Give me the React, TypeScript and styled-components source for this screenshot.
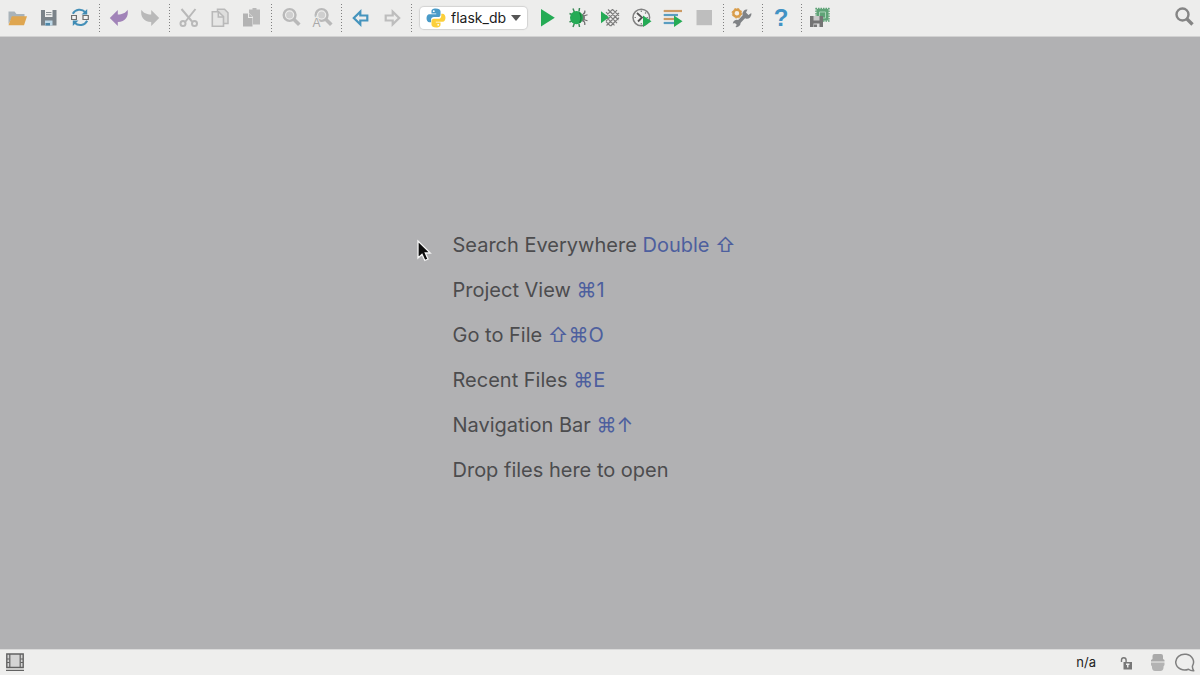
import React from "react";
import styled, { createGlobalStyle } from "styled-components";

const GlobalStyle = createGlobalStyle`
  * { box-sizing: border-box; }
  body {
    margin: 0;
    background: #b1b1b3;
    font-family: Inter, "Liberation Sans", "DejaVu Sans", sans-serif;
  }
`;

const Window = styled.div`
  display: flex;
  flex-direction: column;
  min-height: 100vh;
`;

const Toolbar = styled.header`
  display: flex;
  align-items: center;
  height: 37px;
  padding-left: 2px;
  background: #ededec;
  border-bottom: 1px solid #d2d2d2;
`;

const ToolGroup = styled.div<{ $trail?: number }>`
  display: flex;
  align-items: center;
  padding-right: ${(p) => p.$trail ?? 0}px;
`;

const Separator = styled.span`
  width: 8px;
  height: 28px;
  display: flex;
  justify-content: center;

  &::before {
    content: "";
    width: 1px;
    background: repeating-linear-gradient(#808080 0 1px, transparent 1px 3px);
  }
`;

const Spacer = styled.div`
  flex: 1;
`;

const ToolButton = styled.button`
  display: flex;
  justify-content: center;
  width: 31px;
  padding: 0;
  border: 0;
  background: none;

  svg {
    display: block;
    width: 21px;
    height: 21px;
    overflow: visible;
  }
`;

const ConfigBox = styled.label`
  display: flex;
  align-items: center;
  gap: 5px;
  height: 22px;
  margin: 0 5px 0 5px;
  padding: 0 6px 0 6px;
  border-radius: 4px;
  background: #fff;
  box-shadow: 0 0 1px 1px #d2d2d2;

  svg {
    display: block;
    flex: none;
  }
`;

const ConfigSelect = styled.select`
  appearance: none;
  width: 55px;
  padding: 0;
  border: 0;
  background: none;
  color: #1c1c1c;
  font: 14px/20px Inter, "Liberation Sans", sans-serif;
`;

const EmptyEditor = styled.main`
  position: relative;
  flex: 1;
  display: flex;
  align-items: center;
  justify-content: center;
  padding-top: 30px;
`;

const Hints = styled.ul`
  position: relative;
  width: 295px;
  margin: 0;
  padding: 0;
  list-style: none;
`;

const Hint = styled.li`
  color: #4c4c4e;
  font-size: 20px;
  line-height: 45px;
  white-space: nowrap;
`;

const Shortcut = styled.span`
  color: #4d5f9e;
`;

const Pointer = styled.svg`
  position: absolute;
  left: -37px;
  top: 16px;
  width: 16px;
  height: 24px;
`;

const StatusBar = styled.footer`
  display: flex;
  align-items: center;
  gap: 10px;
  height: 26px;
  padding: 0 5px 2px;
  background: #eeeeed;
  border-top: 1px solid #dadada;
`;

const StatusButton = styled.button`
  padding: 0;
  border: 0;
  background: none;

  svg {
    display: block;
    width: 20px;
    height: 20px;
  }
`;

const StatusText = styled.span`
  padding-right: 9px;
  color: #222;
  font-size: 13px;
  line-height: 20px;
`;

const GREY = "#b9b9b9";
const GREEN = "#25ab55";

type ToolProps = { label: string; box?: string; children: React.ReactNode };

const Tool = ({ label, box = "0 0 21 21", children }: ToolProps) => (
  <ToolButton type="button" aria-label={label}>
    <svg viewBox={box} fill="none">{children}</svg>
  </ToolButton>
);

const StatusTool = ({ label, children }: ToolProps) => (
  <StatusButton type="button" aria-label={label}>
    <svg viewBox="0 0 20 20" fill="none">{children}</svg>
  </StatusButton>
);

const MiniPlay = () => <path d="M13 7.5 21.5 13.2 13 19Z" fill={GREEN} />;

const Bolt = () => (
  <path d="M1.800 10 9.800 2V6.500C14 6.500 18 5 19.600 1.800 20.800 8.500 17.500 13.800 9.800 14V18Z" />
);

const Lens = ({ color }: { color: string }) => (
  <>
    <circle cx="9.600" cy="7" r="5.900" stroke={color} strokeWidth="2.400" />
    <path d="m14 11.500 5.300 5.300" stroke={color} strokeWidth="3.600" />
  </>
);

const PythonLogo = () => (
  <svg width="20" height="20" viewBox="0.500 0.500 19 19" aria-hidden="true">
    <path
      d="M9.800 1C6.500 1 5.700 2.300 5.700 3.800V5.700H10.200V6.400H3.700C1.900 6.400 1 8.300 1 10.200 1 12.300 2 14 3.700 14H5.300V11.700C5.300 10 6.600 9.100 8 9.100H12C13.400 9.100 14.300 8.200 14.300 6.800V3.800C14.300 2 12.500 1 9.800 1Z"
      fill="#4a9bc8"
    />
    <path
      d="M10.200 19C13.500 19 14.300 17.700 14.300 16.200V14.300H9.800V13.600H16.300C18.100 13.600 19 11.700 19 9.800 19 7.700 18 6 16.300 6H15V8C15 9.900 13.600 10.700 12.200 10.700H8C6.600 10.700 5.700 11.700 5.700 13.100V16.200C5.700 18 7.500 19 10.200 19Z"
      fill="#fbcf3b"
    />
    <circle cx="7.900" cy="3.500" r=".9" fill="#fff" />
    <circle cx="12.100" cy="16.500" r=".9" fill="#fff" />
  </svg>
);

const hints: { text: string; keys?: string }[] = [
  { text: "Search Everywhere", keys: "Double ⇧" },
  { text: "Project View", keys: "⌘1" },
  { text: "Go to File", keys: "⇧⌘O" },
  { text: "Recent Files", keys: "⌘E" },
  { text: "Navigation Bar", keys: "⌘↑" },
  { text: "Drop files here to open" },
];

export default function App() {
  return (
    <Window>
      <GlobalStyle />
      <Toolbar>
        <ToolGroup>
          <Tool label="Open">
            <path d="M1.500 16V3.500H7.500L9.500 6H17.500V10H5Z" fill="#a9b3b9" />
            <path d="M4.800 8.300H20L17 17.200H1.500Z" fill="#dfa650" />
          </Tool>
          <Tool label="Save all">
            <path d="M3 2H18.500V17.500H3Z" fill="#7b8389" />
            <path d="M7 2H14.500V9H7Z" fill="#f1f1f0" />
            <path d="M8 4.500H13.500M8 6.700H13.500" stroke="#8b9296" strokeWidth="1" />
            <path d="M7 12.500H14.500V17.500H7Z" fill="#bfd9e8" />
            <path d="M7.500 15H12V17.500H7.500Z" fill="#4d87a8" />
          </Tool>
          <Tool label="Synchronize">
            <path d="M3.800 5.800A7.800 7.800 0 0 1 16.300 4.200M18.200 12.800A7.800 7.800 0 0 1 5.700 14.800" stroke="#4590b8" strokeWidth="2" />
            <path d="M18.200 1V6.500H12.500ZM3.800 18V12.500H9.500Z" fill="#3f8bb4" />
            <path d="M2.600 7.500H7.400V11.500H2.600ZM14 7.500H19.300V11.500H14Z" fill="#f5f5f4" stroke="#6f6f6f" strokeWidth="1.200" />
          </Tool>
        </ToolGroup>
        <Separator />
        <ToolGroup>
          <Tool label="Undo"><g fill="#a183b8"><Bolt /></g></Tool>
          <Tool label="Redo"><g fill={GREY} transform="translate(22 0) scale(-1 1)"><Bolt /></g></Tool>
        </ToolGroup>
        <Separator />
        <ToolGroup $trail={1}>
          <Tool label="Cut">
            <path d="M3.500 1 14 13.500M17.500 1 7.500 13.500" stroke={GREY} strokeWidth="2" />
            <circle cx="5" cy="15.500" r="2.500" stroke={GREY} strokeWidth="2" />
            <circle cx="16.500" cy="15.500" r="2.500" stroke={GREY} strokeWidth="2" />
          </Tool>
          <Tool label="Copy">
            <path d="M8.500 1.200H15.500L19 4.700V15.500H8.500Z" fill="#dededd" stroke={GREY} strokeWidth="1.500" />
            <path d="M3.300 3.700H9.500L14.500 8.500V18.200H3.300Z" fill="#e6e6e5" stroke={GREY} strokeWidth="1.600" />
            <path d="M9.300 3.700V9H14.500" stroke={GREY} strokeWidth="1.500" />
          </Tool>
          <Tool label="Paste">
            <path d="M9 1.500H12.500V0H16.500V1.500H20V16.500H9Z" fill={GREY} />
            <path d="M2.500 4.500H8.500L13 9V19H2.500Z" fill="#ededec" />
            <path d="M3 5.500H8V10H12.500V18.500H3Z" fill="#b3b3b3" />
            <path d="m9 5.500 3.500 3.500H9Z" fill={GREY} />
          </Tool>
        </ToolGroup>
        <Separator />
        <ToolGroup>
          <Tool label="Find">
            <circle cx="9.600" cy="7" r="3.500" fill="#cfcfcf" />
            <Lens color={GREY} />
          </Tool>
          <Tool label="Replace">
            <g transform="translate(1 0)"><circle cx="9.600" cy="7" r="3.500" fill="#cfcfcf" /><Lens color={GREY} /></g>
            <text x="1.500" y="19" fontSize="12" fontWeight="500" fill="#a9a9a9" stroke="#ededec" strokeWidth="2" paintOrder="stroke">A</text>
          </Tool>
        </ToolGroup>
        <Separator />
        <ToolGroup>
          <Tool label="Back">
            <path d="M3.800 10 10.300 3.700V7.500H17.300V12.500H10.300V16.300Z" stroke="#4594bd" strokeWidth="2.200" />
          </Tool>
          <Tool label="Forward">
            <path d="M18.200 10 11.700 3.700V7.500H4.700V12.500H11.700V16.300Z" stroke="#bdbdbd" strokeWidth="2.200" />
          </Tool>
        </ToolGroup>
        <Separator />
        <ConfigBox>
          <PythonLogo />
          <ConfigSelect aria-label="Run configuration" defaultValue="flask_db">
            <option value="flask_db">flask_db</option>
          </ConfigSelect>
          <svg width="10" height="6" viewBox="0 0 10 6" aria-hidden="true">
            <path d="M0 0H10L5 6Z" fill="#555" />
          </svg>
        </ConfigBox>
        <ToolGroup $trail={1}>
          <Tool label="Run"><path d="M4 1 17.800 9.800 4 18.600Z" fill={GREEN} /></Tool>
          <Tool label="Debug">
            <path d="M5 .5 6.500 4.500M11.500 0 11 3.500M1.500 5.500 5 7M1.500 14 5 12.500M5 19 6.500 15M11.500 19 11 16" stroke="#3b8a57" strokeWidth="1.500" />
            <path d="M15 6C17 5.500 17 3.500 16.800 2.500M15.500 8 19.500 6.800M15.500 11.500 19.500 12.700M15 13C17 13.500 17 15.500 16.800 17" stroke="#6d6d6d" strokeWidth="1.200" />
            <path d="M13.500 5.500Q17 6.500 17 9.800T13.500 14Z" fill="#777" />
            <ellipse cx="8.500" cy="9.700" rx="6.500" ry="6.600" fill={GREEN} />
            <path d="M11.500 4.500Q14.500 9.700 11.500 15" stroke="#187c3c" strokeWidth="1.200" />
          </Tool>
          <Tool label="Run with coverage">
            <path d="M9 1.500 19.500 12M7 4.200 18 15.200M7 8.900 15.500 17.400M7 13.600 11.500 18.100M13.500 1.300 20 7.800M13.500 1.300 7 7.800M18 2.200 7 13.200M20 5 7.500 17.500M20 9.700 11.700 18" stroke="#7c7c7c" strokeWidth="1.200" />
            <path d="M2 3.300 10 9.300 2 15.300Z" fill={GREEN} />
          </Tool>
          <Tool label="Profile">
            <circle cx="11.300" cy="9.500" r="8.300" fill="#f1f1f0" stroke="#818181" strokeWidth="1.500" />
            <path d="M7 5 12 9.500 8 13.500" stroke="#555" strokeWidth="1.800" />
            <path d="M11.300 2.500V4M11.300 15V16.500M4.500 9.500H6M16.500 9.500H18M16 4.500 15 5.500" stroke="#818181" strokeWidth="1.200" />
            <MiniPlay />
          </Tool>
          <Tool label="Concurrency diagram">
            <path d="M2.700 3H21" stroke="#cc9a64" strokeWidth="2.200" />
            <path d="M2.700 7H17" stroke="#5a9dc0" strokeWidth="2.200" />
            <path d="M2.700 11H13" stroke="#cc9a64" strokeWidth="2.200" />
            <path d="M2.700 15H13" stroke="#5a9dc0" strokeWidth="2.200" />
            <MiniPlay />
          </Tool>
          <Tool label="Stop"><path d="M4.500 2H20V17.200H4.500Z" fill="#bebebe" /></Tool>
        </ToolGroup>
        <Separator />
        <ToolGroup>
          <Tool label="Settings">
            <path d="M4.500 16.500 14 6.500" stroke="#808386" strokeWidth="3.800" />
            <path d="M15.500 1.500A4.500 4.500 0 0 0 10.500 7L13.500 10.500A4.500 4.500 0 0 0 19.300 5L16.500 7 14 4.500Z" fill="#808386" />
            <path d="M3.500 19A4 4 0 0 0 8.500 14.500L6 12A4 4 0 0 0 .8 15.500L3.500 15 5 16.500Z" fill="#808386" />
            <circle cx="4.900" cy="5.200" r="3.500" stroke="#d99c48" strokeWidth="2.400" fill="#f4eee5" />
            <circle cx="4.900" cy="5.200" r="4.800" stroke="#d99c48" strokeWidth="1" strokeDasharray="2 1.770" />
          </Tool>
        </ToolGroup>
        <Separator />
        <ToolGroup>
          <Tool label="Help">
            <text x="10" y="18" textAnchor="middle" fontSize="24" fontWeight="700" fill="#4292c4">?</text>
          </Tool>
        </ToolGroup>
        <Separator />
        <ToolGroup>
          <Tool label="Save environment">
            <path d="M6.500 .8H18.500V12.500H6.500Z" fill="#5fa377" />
            <path d="M5.500 .5H19.300M5.500 13H19.300M6 0V13.500M19 0V13.500" stroke="#5fa377" strokeWidth="1.400" strokeDasharray="1.500 1" />
            <path d="M9.500 4H15.500V10H9.500Z" stroke="#a9d2b6" strokeWidth="1" />
            <path d="M0 8H13V19H0Z" fill="#747474" />
            <path d="M3.500 8H9.500V12.500H3.500Z" fill="#c9c9c9" />
            <path d="M3.500 15.500H9.500V19H3.500Z" fill="#ddd" />
            <path d="M4 16.500H7V19H4Z" fill="#777" />
          </Tool>
        </ToolGroup>
        <Spacer />
        <Tool label="Search everywhere" box="0 -2 21 21">
          <circle cx="8.500" cy="4.500" r="6" stroke="#858585" strokeWidth="2.400" />
          <path d="m13 9 5.500 5.500" stroke="#858585" strokeWidth="3.400" />
        </Tool>
      </Toolbar>

      <EmptyEditor>
        <Hints>
          <Pointer viewBox="0 0 16 24" aria-hidden="true">
            <path d="M2 2V19L6 15.300 8.800 21.500 12 20 9.300 14H14.300Z" fill="#0c0c0c" stroke="#f4f4f4" strokeWidth="1.300" />
          </Pointer>
          {hints.map((hint) => (
            <Hint key={hint.text}>
              {hint.text} {hint.keys && <Shortcut>{hint.keys}</Shortcut>}
            </Hint>
          ))}
        </Hints>
      </EmptyEditor>

      <StatusBar>
        <StatusTool label="Tool windows">
          <path d="M1.800 2H18.200V15.500H1.800Z" fill="#d4d4d4" stroke="#626262" strokeWidth="1.400" />
          <path d="M4.800 2V15.500M15.200 2V15.500" stroke="#626262" strokeWidth="1.200" />
          <path d="M2 7H4.500M2 10.500H4.500M15.500 7H18M15.500 10.500H18M1 18.300H19" stroke="#626262" strokeWidth="1.200" />
        </StatusTool>
        <Spacer />
        <StatusText>n/a</StatusText>
        <StatusTool label="Read-only lock">
          <path d="M6.500 10V8A2.300 2.300 0 0 1 11.100 8V10" stroke="#777" strokeWidth="1.400" />
          <path d="M8.500 10H17V17.500H8.500Z" fill="#777" />
          <path d="M11 12.300H14.500M12.750 12.500V15.500" stroke="#eee" strokeWidth="1.400" />
        </StatusTool>
        <StatusTool label="Inspection profile">
          <path d="M7.500 7V4Q7.500 2 9.500 2H16Q18 2 18 4V7L19.500 8V9.500H6V8Z" fill="#a9a9a9" />
          <path d="M6 10.500H19.500V13L18.500 14.500V16Q18 19 15.500 19H10Q7.500 19 7 16V14.500L6 13Z" fill="#b3b3b3" />
        </StatusTool>
        <StatusTool label="Event log">
          <path d="M13.500 17.200A8.900 7.900 0 1 1 17.500 13.800Q17 16 18.800 18.800 15.500 19 13.500 17.200Z" stroke="#808080" strokeWidth="1.500" strokeLinejoin="round" />
        </StatusTool>
      </StatusBar>
    </Window>
  );
}
